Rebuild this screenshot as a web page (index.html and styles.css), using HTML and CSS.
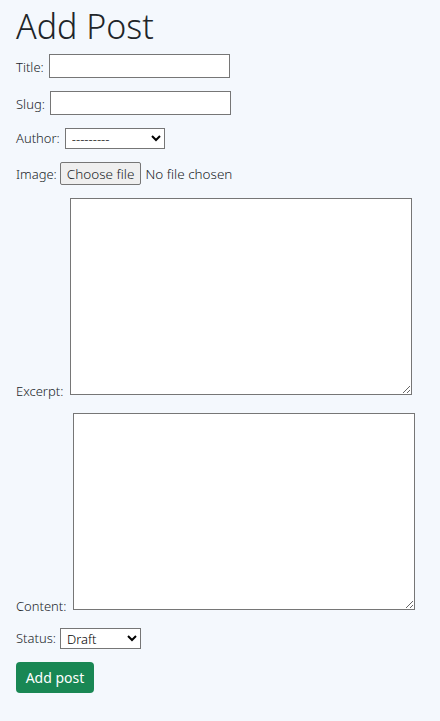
FILE: index.html
```html
<!DOCTYPE html>
<html>
<head>
<meta charset="utf-8">
<link rel="stylesheet" href="styles.css">
</head>
<body>
<h1 class="title">Add Post</h1>
<form class="form">
  <p class="row"><label>Title:</label><input class="text" type="text"></p>
  <p class="row"><label>Slug:</label><input class="text" type="text"></p>
  <p class="row"><label>Author:</label><select class="sel author"><option>---------</option></select></p>
  <p class="row row-tight"><label>Image:</label><span class="file"><span class="file-btn">Choose file</span><span class="file-name">No file chosen</span></span></p>
  <p class="row row-area"><label>Excerpt:</label><textarea class="area"></textarea></p>
  <p class="row row-area"><label>Content:</label><textarea class="area"></textarea></p>
  <p class="row row-status"><label>Status:</label><select class="sel status"><option>Draft</option></select></p>
  <button class="submit" type="button">Add post</button>
</form>
</body>
</html>
```
FILE: styles.css
```css
html, body {
  margin: 0;
  background: #f4f8fd;
}
body {
  padding: 0 16px;
  font-family: "Noto Sans", "Open Sans", sans-serif;
  font-weight: 300;
  color: #212529;
  font-size: 13px;
}
.title {
  font-family: "Noto Sans", sans-serif;
  font-weight: 300;
  font-size: 34px;
  line-height: 40px;
  margin: 6px 0 8px 0;
}
.form {
  display: flex;
  flex-direction: column;
  gap: 13px;
}
.row {
  margin: 0;
  display: flex;
  align-items: flex-end;
  gap: 5px;
}
.row-tight {
  gap: 3px;
}
.row-status {
  gap: 4px;
}
.row label {
  line-height: 16px;
  padding-bottom: 3px;
}
.row-area {
  padding-bottom: 5px;
  gap: 7px;
}
.row-area label {
  padding-bottom: 0;
  margin-bottom: -4px;
}
.text {
  width: 181px;
  height: 24px;
  box-sizing: border-box;
  border: 1px solid #767676;
  background: #fff;
  margin: 0;
}
.sel {
  height: 21px;
  box-sizing: border-box;
  border: 1px solid #767676;
  background: #fff;
  font-family: "Noto Sans", sans-serif;
  font-weight: 300;
  font-size: 13px;
  color: #000;
  margin: 0;
  padding: 0 2px;
}
.author { width: 100px; }
.status { width: 81px; }
.file {
  display: flex;
  align-items: center;
  gap: 4px;
  font-size: 13.5px;
}
.file-btn {
  background: #efefef;
  border: 1px solid #767676;
  border-radius: 2px;
  padding: 1px 6px;
  height: 23px;
  box-sizing: border-box;
  display: flex;
  align-items: center;
}
.area {
  width: 342px;
  height: 197px;
  box-sizing: border-box;
  border: 1px solid #767676;
  background: #fff;
  margin: 0;
}
.submit {
  align-self: flex-start;
  background: #198754;
  color: #fff;
  border: none;
  border-radius: 4px;
  width: 78px;
  height: 31px;
  font-family: "Noto Sans", sans-serif;
  font-weight: 400;
  font-size: 14px;
  padding: 0;
  margin-top: 0;
}
```
